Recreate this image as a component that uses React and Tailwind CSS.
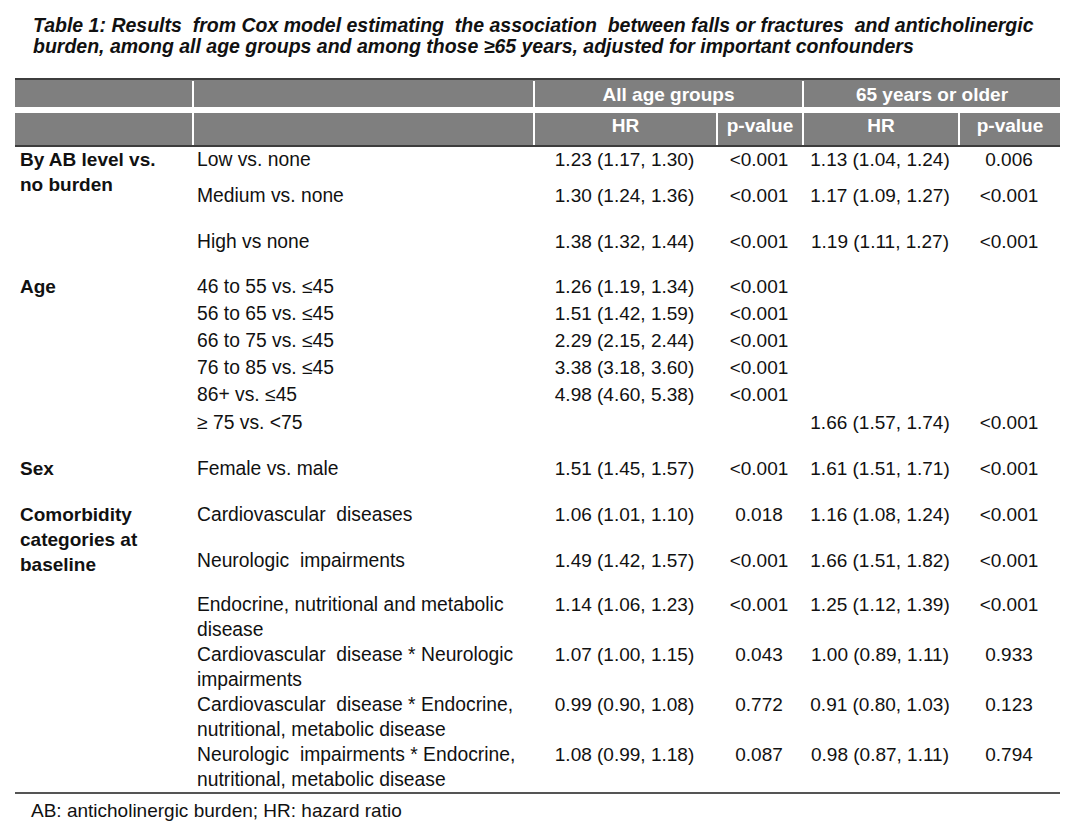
import React from "react";

// Results table: rows grouped by the bold label in the first column
const groups = [
  {
    label: ["By AB level vs.", "no burden"],
    rows: [
      { name: ["Low vs. none"], h: "h-[36px]", a: "1.23 (1.17, 1.30)", ap: "<0.001", b: "1.13 (1.04, 1.24)", bp: "0.006" },
      { name: ["Medium vs. none"], h: "h-[46px]", a: "1.30 (1.24, 1.36)", ap: "<0.001", b: "1.17 (1.09, 1.27)", bp: "<0.001" },
      { name: ["High vs none"], h: "h-[45px]", a: "1.38 (1.32, 1.44)", ap: "<0.001", b: "1.19 (1.11, 1.27)", bp: "<0.001" },
    ],
  },
  {
    label: ["Age"],
    rows: [
      { name: ["46 to 55 vs. ≤45"], h: "h-[27px]", a: "1.26 (1.19, 1.34)", ap: "<0.001" },
      { name: ["56 to 65 vs. ≤45"], h: "h-[27px]", a: "1.51 (1.42, 1.59)", ap: "<0.001" },
      { name: ["66 to 75 vs. ≤45"], h: "h-[27px]", a: "2.29 (2.15, 2.44)", ap: "<0.001" },
      { name: ["76 to 85 vs. ≤45"], h: "h-[27px]", a: "3.38 (3.18, 3.60)", ap: "<0.001" },
      { name: ["86+ vs. ≤45"], h: "h-[28px]", a: "4.98 (4.60, 5.38)", ap: "<0.001" },
      { name: ["≥ 75 vs. <75"], h: "h-[46px]", b: "1.66 (1.57, 1.74)", bp: "<0.001" },
    ],
  },
  {
    label: ["Sex"],
    rows: [
      { name: ["Female vs. male"], h: "h-[46px]", a: "1.51 (1.45, 1.57)", ap: "<0.001", b: "1.61 (1.51, 1.71)", bp: "<0.001" },
    ],
  },
  {
    label: ["Comorbidity", "categories at", "baseline"],
    rows: [
      { name: ["Cardiovascular  diseases"], h: "h-[46px]", a: "1.06 (1.01, 1.10)", ap: "0.018", b: "1.16 (1.08, 1.24)", bp: "<0.001" },
      { name: ["Neurologic  impairments"], h: "h-[44px]", a: "1.49 (1.42, 1.57)", ap: "<0.001", b: "1.66 (1.51, 1.82)", bp: "<0.001" },
      { name: ["Endocrine, nutritional and metabolic", "disease"], h: "h-[50px]", a: "1.14 (1.06, 1.23)", ap: "<0.001", b: "1.25 (1.12, 1.39)", bp: "<0.001" },
      { name: ["Cardiovascular  disease * Neurologic", "impairments"], h: "h-[50px]", a: "1.07 (1.00, 1.15)", ap: "0.043", b: "1.00 (0.89, 1.11)", bp: "0.933" },
      { name: ["Cardiovascular  disease * Endocrine,", "nutritional, metabolic disease"], h: "h-[50px]", a: "0.99 (0.90, 1.08)", ap: "0.772", b: "0.91 (0.80, 1.03)", bp: "0.123" },
      { name: ["Neurologic  impairments * Endocrine,", "nutritional, metabolic disease"], h: "h-[50px]", a: "1.08 (0.99, 1.18)", ap: "0.087", b: "0.98 (0.87, 1.11)", bp: "0.794" },
    ],
  },
];

const cols = "grid grid-cols-[341px_183px_86px_156px_102px]";

const App = () => {
  return (
    <div className="bg-white w-[1080px] h-[833px] overflow-hidden font-['Liberation_Sans',Arial,sans-serif] text-[#111]">
      <h1 className="pt-[15px] pl-[33px] text-[19.5px] leading-[21px] font-bold italic whitespace-pre">
        {"Table 1: Results  from Cox model estimating  the association  between falls or fractures  and anticholinergic"}
        <br />
        {"burden, among all age groups and among those ≥65 years, adjusted for important confounders"}
      </h1>

      <div className="ml-[15px] mt-[21px] w-[1045px] text-[19px]">
        {/* header */}
        <div className="border-t-2 border-b-2 border-[#3d3d3d] text-white font-bold">
          <div className="grid grid-cols-[177px_341px_269px_258px] h-[27px] bg-[#7f7f7f] leading-[27px] pt-[1px]">
            <div />
            <div className="border-l-2 border-white" />
            <div className="border-l-2 border-white text-center">All age groups</div>
            <div className="border-l-2 border-white text-center">65 years or older</div>
          </div>
          <div className="h-[6px] bg-white" />
          <div className="grid grid-cols-[177px_341px_183px_86px_156px_102px] h-[32px] bg-[#7f7f7f] leading-[25px]">
            <div />
            <div className="border-l-2 border-white" />
            <div className="border-l-2 border-white text-center">HR</div>
            <div className="border-l-2 border-white text-center">p-value</div>
            <div className="border-l-2 border-white text-center">HR</div>
            <div className="border-l-2 border-white text-center">p-value</div>
          </div>
        </div>

        {/* body */}
        <div className="border-b-2 border-[#555]">
          {groups.map((g, gi) => (
            <div key={gi} className="flex">
              <div className="w-[177px] pl-[5px] font-bold leading-[25px]">
                {g.label.map((l, i) => (
                  <div key={i}>{l}</div>
                ))}
              </div>
              <div className="flex flex-col">
                {g.rows.map((r, ri) => (
                  <div key={ri} className={`${cols} ${r.h} leading-[25px]`}>
                    <div className="pl-[5px] whitespace-pre text-[19.3px]">
                      {r.name.map((n, i) => (
                        <div key={i}>{n}</div>
                      ))}
                    </div>
                    <div className="text-center">{r.a}</div>
                    <div className="text-center">{r.ap}</div>
                    <div className="text-center">{r.b}</div>
                    <div className="text-center">{r.bp}</div>
                  </div>
                ))}
              </div>
            </div>
          ))}
        </div>

        <p className="pl-[16px] pt-[4px] leading-[25px] text-[19px]">
          AB: anticholinergic burden; HR: hazard ratio
        </p>
      </div>
    </div>
  );
};

export default App;
